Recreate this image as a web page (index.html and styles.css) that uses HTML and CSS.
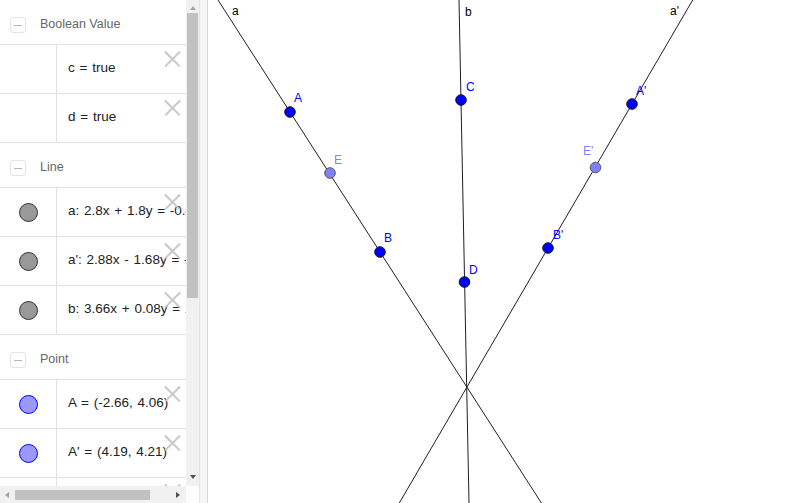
FILE: index.html
```html
<!DOCTYPE html>
<html>
<head>
<meta charset="utf-8">
<link rel="stylesheet" href="styles.css">
</head>
<body>
<div class="app">
  <div class="algebra">
    <div class="av-main">
      <div class="av-list">
        <div class="group-head"><span class="toggle"></span><span class="group-title">Boolean Value</span></div>
        <div class="item"><div class="marble-col"></div><div class="item-text">c = true</div><span class="del"></span></div>
        <div class="item"><div class="marble-col"></div><div class="item-text">d = true</div><span class="del"></span></div>
        <div class="group-head"><span class="toggle"></span><span class="group-title">Line</span></div>
        <div class="item"><div class="marble-col"><span class="marble line"></span></div><div class="item-text">a: 2.8x + 1.8y = -0.4</div><span class="del"></span></div>
        <div class="item"><div class="marble-col"><span class="marble line"></span></div><div class="item-text">a': 2.88x - 1.68y = -4.6</div><span class="del"></span></div>
        <div class="item"><div class="marble-col"><span class="marble line"></span></div><div class="item-text">b: 3.66x + 0.08y = 1.7</div><span class="del"></span></div>
        <div class="group-head"><span class="toggle"></span><span class="group-title">Point</span></div>
        <div class="item"><div class="marble-col"><span class="marble point"></span></div><div class="item-text">A = (-2.66, 4.06)</div><span class="del"></span></div>
        <div class="item"><div class="marble-col"><span class="marble point"></span></div><div class="item-text">A' = (4.19, 4.21)</div><span class="del"></span></div>
        <div class="item"><div class="marble-col"><span class="marble point"></span></div><div class="item-text">B = (-1.03, 1.35)</div><span class="del"></span></div>
      </div>
      <div class="vscroll">
        <span class="arrow up"></span>
        <div class="vtrack"><div class="vthumb"></div></div>
        <span class="arrow down"></span>
      </div>
    </div>
    <div class="hscroll-row">
      <div class="hscroll">
        <span class="arrow left"></span>
        <div class="htrack"><div class="hthumb"></div></div>
        <span class="arrow right"></span>
      </div>
      <div class="corner"></div>
    </div>
  </div>
  <div class="divider"></div>
  <div class="canvas">
    <svg class="graphics" width="592" height="503" viewBox="208 0 592 503">
      <g stroke="#1e1e1e" stroke-width="1" fill="none">
        <line x1="218" y1="0" x2="541.4" y2="503"/>
        <line x1="459" y1="0" x2="469" y2="503"/>
        <line x1="692.7" y1="0" x2="399.3" y2="503"/>
      </g>
      <g font-family="Liberation Sans, Arial, sans-serif" font-size="12" fill="#000">
        <text x="232" y="15">a</text>
        <text x="465" y="16">b</text>
        <text x="670" y="15">a'</text>
      </g>
      <g stroke="#1a1a1a" stroke-width="1">
        <circle cx="290" cy="112" r="5.3" fill="#0000ff"/>
        <circle cx="380" cy="252" r="5.3" fill="#0000ff"/>
        <circle cx="461" cy="100" r="5.3" fill="#0000ff"/>
        <circle cx="464.5" cy="282" r="5.3" fill="#0000ff"/>
        <circle cx="632" cy="104" r="5.3" fill="#0000ff"/>
        <circle cx="548" cy="248" r="5.3" fill="#0000ff"/>
      </g>
      <g stroke="#555" stroke-width="1">
        <circle cx="330" cy="173" r="5.3" fill="#7f7fff"/>
        <circle cx="595.5" cy="167.5" r="5.3" fill="#7f7fff"/>
      </g>
      <g font-family="Liberation Sans, Arial, sans-serif" font-size="12" fill="#0000ff">
        <text x="294" y="102">A</text>
        <text x="384" y="242">B</text>
        <text x="466" y="91">C</text>
        <text x="469" y="274">D</text>
        <text x="636" y="95">A'</text>
        <text x="553" y="239">B'</text>
      </g>
      <g font-family="Liberation Sans, Arial, sans-serif" font-size="12" fill="#7f7fff">
        <text x="334" y="164">E</text>
        <text x="583" y="155">E'</text>
      </g>
    </svg>
  </div>
</div>
</body>
</html>
```

FILE: styles.css
```css
html, body {
  margin: 0;
  padding: 0;
  background: #fff;
}
body {
  font-family: "Liberation Sans", Arial, sans-serif;
  width: 800px;
  height: 503px;
  overflow: hidden;
}
.app {
  display: flex;
  width: 800px;
  height: 503px;
}
.algebra {
  width: 199px;
  flex: none;
  display: flex;
  flex-direction: column;
  background: #fff;
}
.av-main {
  display: flex;
  height: 486px;
}
.av-list {
  width: 186px;
  overflow: hidden;
  flex: none;
}
.group-head {
  height: 44px;
  border-bottom: 1px solid #e1e1e1;
  display: flex;
  align-items: center;
  box-sizing: content-box;
}
.toggle {
  width: 14px;
  height: 14px;
  border: 1px solid #e3e3e3;
  border-radius: 3px;
  margin-left: 10px;
  margin-top: 6px;
  position: relative;
  flex: none;
}
.toggle::after {
  content: "";
  position: absolute;
  left: 3px;
  top: 7px;
  width: 8px;
  height: 1px;
  background: #b5b5b5;
}
.group-title {
  margin-left: 14px;
  margin-top: 4px;
  font-size: 12.5px;
  color: #666;
  white-space: nowrap;
}
.item {
  height: 48px;
  border-bottom: 1px solid #e1e1e1;
  display: flex;
  position: relative;
}
.marble-col {
  width: 56px;
  flex: none;
  border-right: 1px solid #e1e1e1;
  display: flex;
  align-items: center;
  justify-content: center;
}
.marble {
  width: 17px;
  height: 17px;
  border-radius: 50%;
  margin-left: 1px;
}
.marble.line {
  background: #999;
  border: 1px solid #333;
}
.marble.point {
  background: #9999ff;
  border: 1px solid #0000ff;
}
.item-text {
  display: flex;
  align-items: center;
  padding-left: 11px;
  padding-bottom: 4px;
  font-size: 13.5px;
  color: #222;
  white-space: nowrap;
  word-spacing: 1px;
}
.del {
  position: absolute;
  right: 6px;
  top: 6px;
  width: 16px;
  height: 16px;
}
.del::before, .del::after {
  content: "";
  position: absolute;
  left: -2px;
  top: 7px;
  width: 21px;
  height: 1.5px;
  background: #c8c8c8;
  transform: rotate(45deg);
}
.del::after {
  transform: rotate(-45deg);
}
.vscroll {
  width: 13px;
  flex: none;
  background: #f1f1f1;
  display: flex;
  flex-direction: column;
  align-items: center;
}
.vtrack {
  flex: 1;
  width: 11px;
  padding-top: 3px;
}
.vthumb {
  width: 11px;
  height: 285px;
  background: #c1c1c1;
}
.arrow {
  width: 0;
  height: 0;
  flex: none;
}
.arrow.up {
  margin-top: 6px;
  border-left: 3.5px solid transparent;
  border-right: 3.5px solid transparent;
  border-bottom: 4px solid #a3a3a3;
}
.arrow.down {
  margin-bottom: 7px;
  border-left: 3.5px solid transparent;
  border-right: 3.5px solid transparent;
  border-top: 4px solid #505050;
}
.hscroll-row {
  display: flex;
  flex: 1;
}
.hscroll {
  width: 186px;
  background: #f1f1f1;
  display: flex;
  align-items: center;
}
.arrow.left {
  margin-left: 5px;
  border-top: 3.5px solid transparent;
  border-bottom: 3.5px solid transparent;
  border-right: 4px solid #a3a3a3;
}
.arrow.right {
  margin-right: 6px;
  border-top: 3.5px solid transparent;
  border-bottom: 3.5px solid transparent;
  border-left: 4px solid #505050;
}
.htrack {
  flex: 1;
  padding-left: 6px;
  display: flex;
}
.hthumb {
  width: 135px;
  height: 10px;
  background: #c1c1c1;
}
.corner {
  flex: 1;
  background: #fff;
}
.divider {
  width: 7px;
  flex: none;
  background: #f6f6f6;
  border-left: 1px solid #e4e4e4;
  border-right: 1px solid #d9d9d9;
}
.canvas {
  flex: 1;
  background: #fff;
  overflow: hidden;
}
.graphics {
  display: block;
}
```
